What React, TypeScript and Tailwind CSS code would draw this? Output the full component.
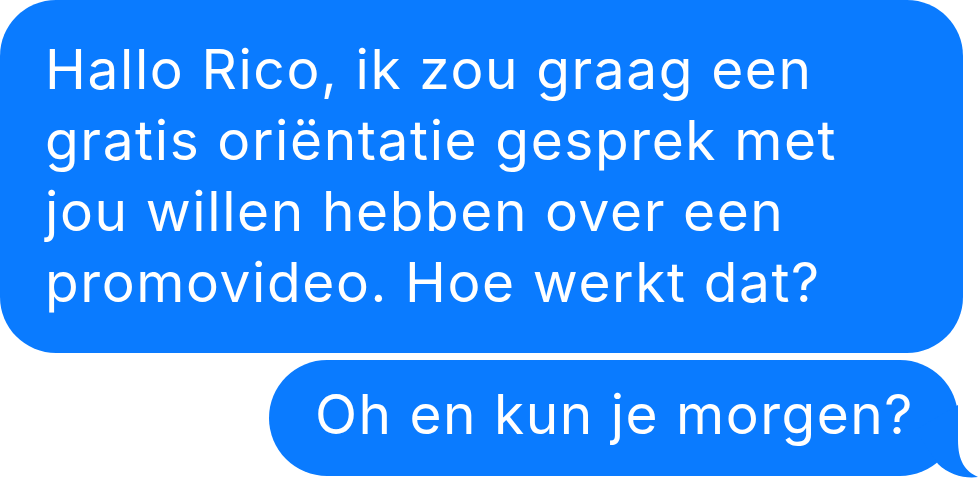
import React from "react";

export default function App() {
  const font = { fontFamily: "Inter, 'Noto Sans', sans-serif" };
  return (
    <div className="w-[980px] h-[479px] bg-white overflow-hidden flex flex-col" style={font}>
      <div className="w-[963px] h-[353px] bg-[#0a7bff] rounded-[56px] pl-[45px] pt-[34px] text-white text-[55px] leading-[71px] tracking-[1.6px]">
        <div>Hallo Rico, ik zou graag een</div>
        <div>gratis oriëntatie gesprek met</div>
        <div>jou willen hebben over een</div>
        <div>promovideo. Hoe werkt dat?</div>
      </div>
      <div className="relative ml-[269px] mt-[7px] w-[689px] h-[116px]">
        <div className="w-full h-full bg-[#0a7bff] rounded-[58px] pl-[46px] pt-[19px] text-white text-[55px] leading-[71px] tracking-[1.5px]">
          Oh en kun je morgen?
        </div>
        <svg
          className="absolute left-0 top-0 overflow-visible"
          width="689"
          height="116"
          viewBox="269 360 689 116"
        >
          <path
            d="M958 405 L958 440 C958 461 965 471 978 477 C966 479 949 475 938 464 L915 430 Z"
            fill="#0a7bff"
          />
        </svg>
      </div>
    </div>
  );
}
